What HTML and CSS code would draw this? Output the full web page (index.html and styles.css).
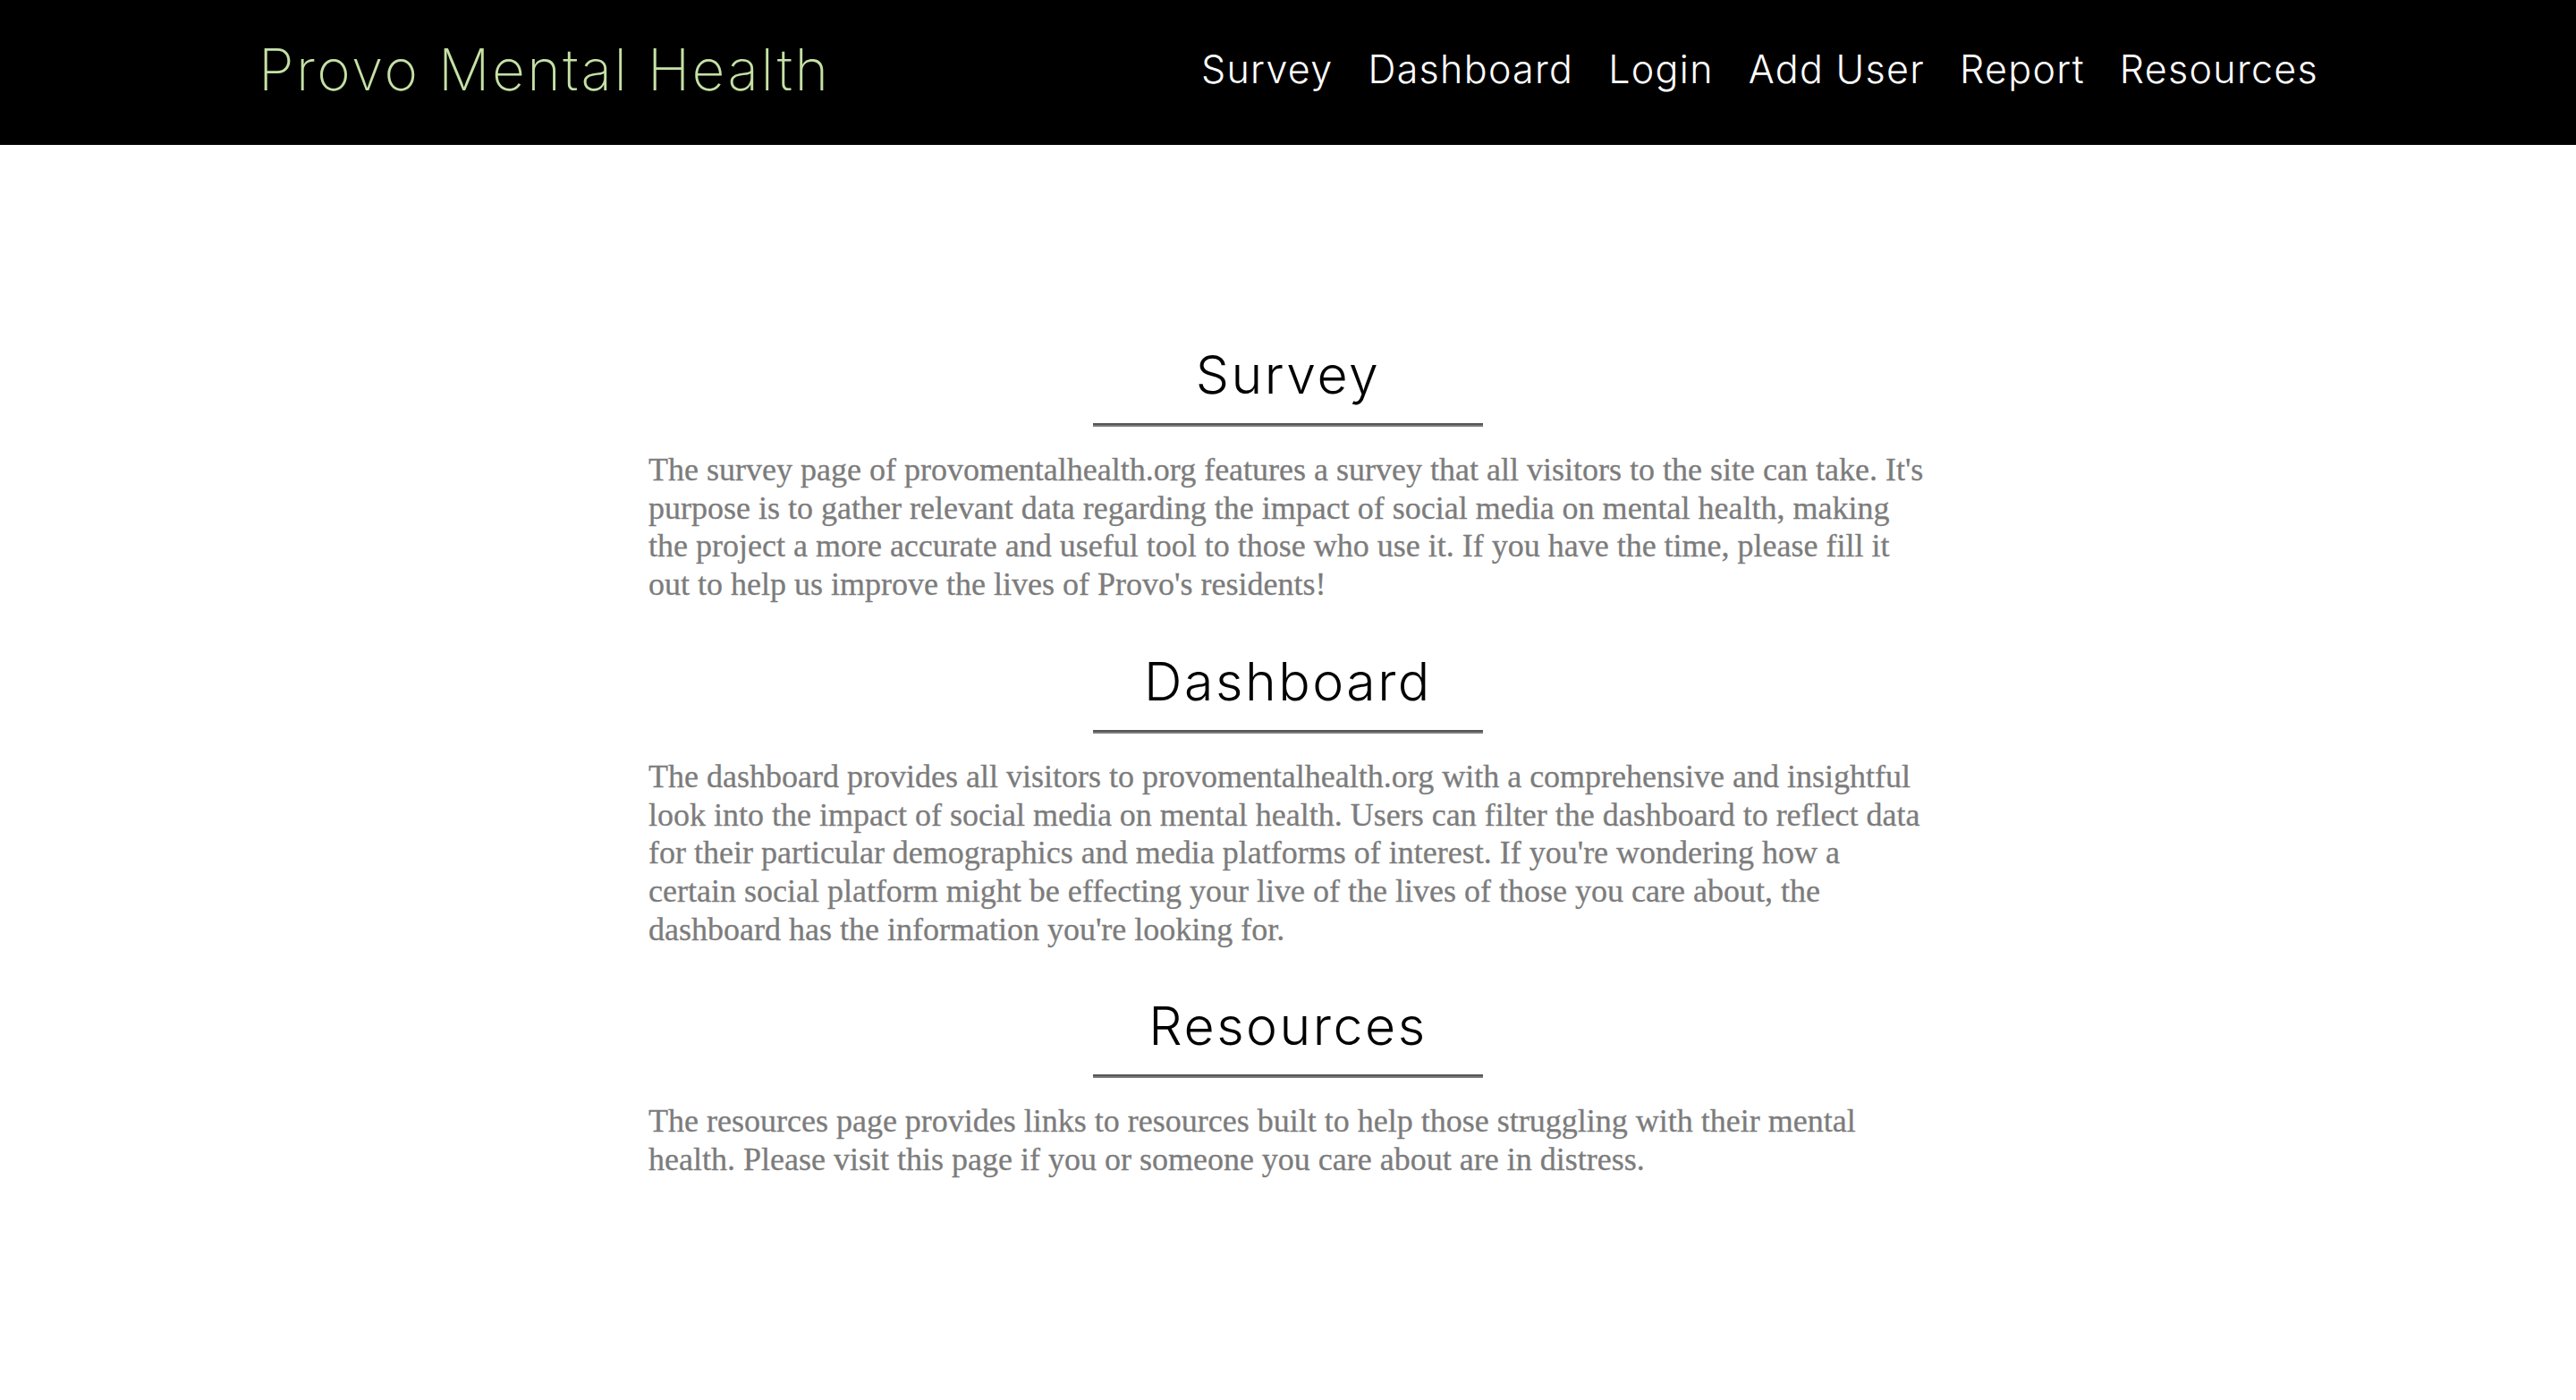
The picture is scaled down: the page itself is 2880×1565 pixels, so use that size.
FILE: index.html
```html
<!DOCTYPE html>
<html lang="en">
<head>
<meta charset="utf-8">
<title>Provo Mental Health</title>
<link rel="stylesheet" href="styles.css">
</head>
<body>
<header class="site-header">
  <div class="header-inner">
    <a class="brand" href="#">Provo Mental Health</a>
    <nav class="main-nav">
      <a href="#">Survey</a>
      <a href="#">Dashboard</a>
      <a href="#">Login</a>
      <a href="#">Add User</a>
      <a href="#">Report</a>
      <a href="#">Resources</a>
    </nav>
  </div>
</header>
<main class="content">
  <section class="info">
    <h2 class="info-title">Survey</h2>
    <div class="rule"></div>
    <p class="info-text">The survey page of provomentalhealth.org features a survey that all visitors to the site can take. It's purpose is to gather relevant data regarding the impact of social media on mental health, making the project a more accurate and useful tool to those who use it. If you have the time, please fill it out to help us improve the lives of Provo's residents!</p>
  </section>
  <section class="info">
    <h2 class="info-title">Dashboard</h2>
    <div class="rule"></div>
    <p class="info-text">The dashboard provides all visitors to provomentalhealth.org with a comprehensive and insightful look into the impact of social media on mental health. Users can filter the dashboard to reflect data for their particular demographics and media platforms of interest. If you're wondering how a certain social platform might be effecting your live of the lives of those you care about, the dashboard has the information you're looking for.</p>
  </section>
  <section class="info">
    <h2 class="info-title">Resources</h2>
    <div class="rule"></div>
    <p class="info-text">The resources page provides links to resources built to help those struggling with their mental health. Please visit this page if you or someone you care about are in distress.</p>
  </section>
</main>
</body>
</html>
```

FILE: styles.css
```css
html, body {
  margin: 0;
  padding: 0;
  background: #fff;
}

.site-header {
  background: #000;
  height: 162px;
}

.header-inner {
  width: 80%;
  height: 100%;
  box-sizing: border-box;
  margin: 0 auto;
  padding-bottom: 8px;
  display: flex;
  align-items: center;
  justify-content: space-between;
}

.brand {
  font-family: Inter, "Noto Sans", sans-serif;
  font-weight: 200;
  font-size: 64px;
  color: #c5e1a5;
  text-decoration: none;
  letter-spacing: 2.5px;
  padding-left: 1px;
}

.main-nav {
  display: flex;
  gap: 39px;
}

.main-nav a {
  font-family: Inter, "Noto Sans", sans-serif;
  font-weight: 300;
  font-size: 43px;
  letter-spacing: 1.3px;
  color: #fff;
  text-decoration: none;
}

.content {
  width: 1430px;
  margin: 0 auto;
  padding-top: 221px;
  padding-bottom: 100px;
}

.info {
  display: flex;
  flex-direction: column;
  align-items: center;
  margin-bottom: 51px;
}

.info-title {
  margin: 0;
  font-family: Inter, "Noto Sans", sans-serif;
  font-weight: 300;
  font-size: 59px;
  line-height: 72px;
  letter-spacing: 2.5px;
  color: #000;
  text-align: center;
}

.rule {
  width: 436px;
  height: 0;
  margin-top: 18px;
  border-top: 2px solid #555;
  border-bottom: 2px solid #7a7a7a;
}

.info-text {
  align-self: stretch;
  margin: 27px 0 0 0;
  font-family: "Liberation Serif", "Times New Roman", serif;
  font-size: 36px;
  line-height: 42.7px;
  color: #7c7c7c;
  -webkit-text-stroke: 0.3px #7c7c7c;
}
```
